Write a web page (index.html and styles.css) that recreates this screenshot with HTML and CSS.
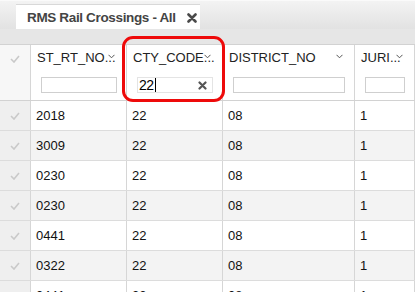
FILE: index.html
```html
<!DOCTYPE html>
<html lang="en">
<head>
  <meta charset="UTF-8">
  <title>RMS Rail Crossings - All</title>
  <link rel="stylesheet" href="styles.css">
</head>
<body>

<div class="tabbar">
  <div class="tab">
    <span class="tab-title">RMS Rail Crossings - All</span>
    <svg class="tab-close" width="10" height="10" viewBox="0 0 10 10">
      <path d="M1.5 1.5 L8.5 8.5 M8.5 1.5 L1.5 8.5" stroke="#4a4a4a" stroke-width="2.6" stroke-linecap="round"/>
    </svg>
  </div>
</div>
<div class="tabband"></div>

<div class="grid">
  <div class="row head">
    <div class="cell check">
      <svg class="tick" width="10" height="8" viewBox="0 0 10 8"><path d="M1 4 L4 7 L9 1" fill="none" stroke="#c9c9c9" stroke-width="1.6"/></svg>
    </div>
    <div class="cell hcell">
      <div class="htitle">ST_RT_NO...</div>
      <svg class="chev" width="7" height="5" viewBox="0 0 7 5"><path d="M0.5 0.8 L3.5 3.8 L6.5 0.8" fill="none" stroke="#555" stroke-width="1"/></svg>
      <input class="filter" type="text">
    </div>
    <div class="cell hcell">
      <div class="htitle">CTY_CODE...</div>
      <svg class="chev" width="7" height="5" viewBox="0 0 7 5"><path d="M0.5 0.8 L3.5 3.8 L6.5 0.8" fill="none" stroke="#555" stroke-width="1"/></svg>
      <div class="filter active">
        <span class="fval">22</span><span class="caret"></span>
        <svg class="fclear" width="9" height="9" viewBox="0 0 9 9"><path d="M1.5 1.5 L7.5 7.5 M7.5 1.5 L1.5 7.5" stroke="#555" stroke-width="2.2" stroke-linecap="round"/></svg>
      </div>
    </div>
    <div class="cell hcell">
      <div class="htitle">DISTRICT_NO</div>
      <svg class="chev" width="7" height="5" viewBox="0 0 7 5"><path d="M0.5 0.8 L3.5 3.8 L6.5 0.8" fill="none" stroke="#555" stroke-width="1"/></svg>
      <input class="filter" type="text">
    </div>
    <div class="cell hcell">
      <div class="htitle">JURI...</div>
      <svg class="chev" width="7" height="5" viewBox="0 0 7 5"><path d="M0.5 0.8 L3.5 3.8 L6.5 0.8" fill="none" stroke="#555" stroke-width="1"/></svg>
      <input class="filter" type="text">
    </div>
  </div>

  <div id="rows"></div>

  <div class="marker"></div>
</div>

<script>
  const rows = document.getElementById("rows");

  // Rows shown after filtering on CTY_CODE = 22
  const data = [
    ["2018", "22", "08", "1"],
    ["3009", "22", "08", "1"],
    ["0230", "22", "08", "1"],
    ["0230", "22", "08", "1"],
    ["0441", "22", "08", "1"],
    ["0322", "22", "08", "1"],
    ["0441", "22", "08", "1"]
  ];

  const tick = '<svg class="tick" width="10" height="8" viewBox="0 0 10 8"><path d="M1 4 L4 7 L9 1" fill="none" stroke="#c9c9c9" stroke-width="1.6"/></svg>';

  data.forEach((item, index) => {
    const row = document.createElement("div");
    row.classList.add("row");
    if (index % 2 === 1) row.classList.add("alt");
    row.innerHTML = `<div class="cell check">${tick}</div>` +
      item.map(value => `<div class="cell">${value}</div>`).join("");
    rows.appendChild(row);
  });
</script>

</body>
</html>
```

FILE: styles.css
```css
html, body {
  margin: 0;
  padding: 0;
  overflow: hidden;
}
body {
  font-family: "Liberation Sans", Arial, sans-serif;
  font-size: 13px;
  color: #111;
  background: #fff;
  width: 415px;
  height: 292px;
}
.tabbar {
  height: 29px;
  padding: 3px 0 0 16px;
  box-sizing: border-box;
  background: linear-gradient(#f3f3f3, #e2e2e2);
  border-top: 1px solid #fafafa;
}
.tab {
  width: 184px;
  height: 26px;
  box-sizing: border-box;
  background: #fff;
  border-top: 1px solid #d8d8d8;
  display: flex;
  align-items: center;
  padding: 0 0 0 11px;
}
.tab-title {
  font-size: 13.5px;
  color: #444;
  font-weight: bold;
  letter-spacing: -0.35px;
}
.tab-close {
  margin-left: 11px;
  margin-top: 1px;
}
.tabband {
  height: 15px;
  background: #e6e6e6;
}
.grid {
  position: relative;
  border-top: 1px solid #d2d2d2;
}
.row {
  display: grid;
  grid-template-columns: 31px 96px 96px 132px 60px;
  height: 30px;
  box-sizing: border-box;
  border-bottom: 1px solid #dcdcdc;
  background: #fff;
}
.row.alt {
  background: #f3f3f3;
}
.row.head {
  height: 56px;
  border-bottom: 1px solid #d2d2d2;
}
.cell {
  border-right: 1px solid #d6d6d6;
  padding-left: 5px;
  line-height: 29px;
  white-space: nowrap;
  overflow: hidden;
}
.cell.check {
  background: #efefef;
  padding-left: 0;
  display: flex;
  justify-content: center;
  align-items: center;
}
.head .cell.check {
  background: #f7f7f7;
  align-items: flex-start;
  padding-top: 10px;
  box-sizing: border-box;
}
.hcell {
  position: relative;
  padding: 5px 0 0 0;
  line-height: 16px;
}
.htitle {
  padding-left: 6px;
  color: #222;
  font-size: 13px;
}
.chev {
  position: absolute;
  top: 9px;
  right: 11px;
}
.filter {
  display: block;
  box-sizing: border-box;
  width: calc(100% - 19px);
  height: 16px;
  margin: 11px 9px 0 10px;
  padding: 0;
  border: 1px solid #cfcfcf;
  background: #fff;
  font: inherit;
}
.filter.active {
  position: relative;
  border-color: #e4e4e4;
  display: flex;
  align-items: center;
  padding-left: 1px;
}
.fval {
  font-size: 14px;
  color: #000;
  line-height: 14px;
  letter-spacing: -0.5px;
}
.caret {
  width: 1px;
  height: 14px;
  background: #000;
  margin-left: 1px;
}
.fclear {
  margin-left: auto;
  margin-right: 5px;
}
.marker {
  position: absolute;
  left: 122px;
  top: -9px;
  width: 103px;
  height: 66px;
  box-sizing: border-box;
  border: 3px solid #ee0a0a;
  border-radius: 11px;
}
```
